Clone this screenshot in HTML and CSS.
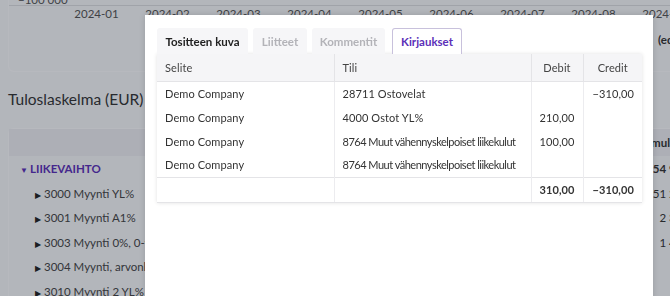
FILE: index.html
```html
<!DOCTYPE html>
<html lang="fi">
<head>
    <meta charset="UTF-8">
    <meta name="viewport" content="width=device-width, initial-scale=1.0">
    <title>Tuloslaskelma</title>
    <link rel="stylesheet" href="styles.css">
</head>
<body>
    <div class="page">
        <div class="chart-card">
            <div class="y-label">−100 000</div>
            <div class="x-axis">
                <span>2024-01</span>
                <span>2024-02</span>
                <span>2024-03</span>
                <span>2024-04</span>
                <span>2024-05</span>
                <span>2024-06</span>
                <span>2024-07</span>
                <span>2024-08</span>
                <span>2024-09</span>
            </div>
            <div class="legend">(edellinen)</div>
        </div>

        <h2 class="report-title">Tuloslaskelma (EUR)</h2>

        <div class="report-card">
            <div class="report-row report-head">
                <span></span>
                <span class="value">Kumulatiivinen</span>
            </div>
            <div class="report-row group">
                <span class="name"><span class="caret">▼</span>LIIKEVAIHTO</span>
                <span class="value">54 987,00</span>
            </div>
            <div class="report-row">
                <span class="name sub"><span class="caret">▶</span>3000 Myynti YL%</span>
                <span class="value">51 234,00</span>
            </div>
            <div class="report-row">
                <span class="name sub"><span class="caret">▶</span>3001 Myynti A1%</span>
                <span class="value">2 345,00</span>
            </div>
            <div class="report-row">
                <span class="name sub"><span class="caret">▶</span>3003 Myynti 0%, 0-verokannan myynti</span>
                <span class="value">1 408,00</span>
            </div>
            <div class="report-row">
                <span class="name sub"><span class="caret">▶</span>3004 Myynti, arvonlisäveroton</span>
                <span class="value"></span>
            </div>
            <div class="report-row">
                <span class="name sub"><span class="caret">▶</span>3010 Myynti 2 YL%</span>
                <span class="value"></span>
            </div>
        </div>
    </div>

    <div class="backdrop"></div>

    <div class="modal">
        <div class="tabs">
            <div class="tab dark">Tositteen kuva</div>
            <div class="tab">Liitteet</div>
            <div class="tab">Kommentit</div>
            <div class="tab active">Kirjaukset</div>
        </div>

        <table class="entries">
            <thead>
                <tr>
                    <th class="c-selite">Selite</th>
                    <th class="c-tili">Tili</th>
                    <th class="c-num">Debit</th>
                    <th class="c-num">Credit</th>
                </tr>
            </thead>
            <tbody>
                <tr>
                    <td>Demo Company</td>
                    <td>28711 Ostovelat</td>
                    <td class="num"></td>
                    <td class="num">−310,00</td>
                </tr>
                <tr>
                    <td>Demo Company</td>
                    <td>4000 Ostot YL%</td>
                    <td class="num">210,00</td>
                    <td class="num"></td>
                </tr>
                <tr>
                    <td>Demo Company</td>
                    <td class="long">8764 Muut vähennyskelpoiset liikekulut</td>
                    <td class="num">100,00</td>
                    <td class="num"></td>
                </tr>
                <tr>
                    <td>Demo Company</td>
                    <td class="long">8764 Muut vähennyskelpoiset liikekulut</td>
                    <td class="num"></td>
                    <td class="num"></td>
                </tr>
            </tbody>
            <tfoot>
                <tr>
                    <td></td>
                    <td></td>
                    <td class="num">310,00</td>
                    <td class="num">−310,00</td>
                </tr>
            </tfoot>
        </table>
    </div>
</body>
</html>
```

FILE: styles.css
```css
* {
    margin: 0;
    padding: 0;
    box-sizing: border-box;
}

body {
    font-family: Lato, "Noto Sans", Arial, sans-serif;
    font-size: 11.5px;
    color: #333;
    background: #f7f8fa;
    overflow: hidden;
    height: 296px;
}

/* taustasivu */
.page {
    width: 720px;
    margin-top: -14px;
    padding: 0 8px;
}

.chart-card {
    position: relative;
    height: 86px;
    border: 1px solid #fdfdfe;
    border-top: none;
    border-radius: 0 0 6px 6px;
}

.y-label {
    padding: 7px 0 0 9px;
    color: #555;
    height: 20px;
    border-bottom: 1px solid #dcdde0;
}

.x-axis {
    display: flex;
    padding-left: 52px;
    padding-top: 1px;
    color: #555;
}

.x-axis span {
    width: 71px;
    flex-shrink: 0;
    text-align: center;
}

.legend {
    position: absolute;
    left: 649px;
    top: 47px;
    font-weight: bold;
    color: #333;
    white-space: nowrap;
}

.report-title {
    font-weight: normal;
    font-size: 15.5px;
    color: #333;
    padding: 18px 0 0 0;
    height: 56px;
}

.report-card {
    border: 1px solid #fdfdfe;
    border-bottom: none;
    border-radius: 6px 6px 0 0;
}

.report-row {
    display: grid;
    grid-template-columns: 1fr 80px;
    height: 24.5px;
    align-items: center;
    padding-right: 6px;
}

.report-head {
    height: 27px;
    background: #eeeff2;
    font-weight: bold;
}

.report-row .value {
    text-align: right;
    white-space: nowrap;
}

.report-head .value {
    text-align: left;
    padding-left: 12px;
}

.group {
    height: 25px;
    color: #5b2fb8;
    font-weight: bold;
}

.group .value {
    color: #333;
}

.name {
    padding-left: 11px;
    white-space: nowrap;
}

.name.sub {
    padding-left: 26px;
    color: #444;
}

.caret {
    display: inline-block;
    width: 10px;
    font-size: 8px;
    color: #222;
}

.group .caret {
    color: #5b2fb8;
}

.sub .caret {
    width: 9px;
}

.backdrop {
    position: fixed;
    inset: 0;
    background: rgba(15, 20, 35, 0.29);
}

/* modaali */
.modal {
    position: absolute;
    left: 145px;
    top: 15px;
    width: 508px;
    height: 300px;
    background: #fff;
    padding: 13px 11px 0 12px;
    box-shadow: 0 0 6px rgba(0, 0, 0, 0.15);
}

.tabs {
    display: flex;
    gap: 5px;
    height: 26px;
}

.tab {
    width: 54px;
    display: flex;
    align-items: center;
    justify-content: center;
    background: #f6f6f8;
    color: #b3b3b8;
    font-weight: bold;
    border-radius: 3px 3px 0 0;
}

.tab.dark {
    width: 91px;
    color: #222;
}

.tab:nth-child(3) {
    width: 73px;
}

.tab.active {
    width: 70px;
    margin-left: 2px;
    background: #fff;
    color: #5b2fb8;
    border: 1px solid #c8c1dc;
    border-bottom: none;
    position: relative;
    z-index: 1;
}

.entries {
    width: 485px;
    border-collapse: collapse;
    table-layout: fixed;
    font-size: 11px;
    letter-spacing: 0.1px;
    box-shadow: 0 0 4px rgba(0, 0, 0, 0.12);
}

.entries th,
.entries td {
    text-align: left;
    font-weight: normal;
    padding: 0 8px;
    white-space: nowrap;
    overflow: hidden;
}

.entries th {
    height: 27px;
    background: #f5f5f7;
    color: #444;
    border-right: 1px solid #e4e4e7;
    border-bottom: 1px solid #e4e4e7;
}

.entries th:last-child {
    border-right: none;
}

.entries td {
    height: 24px;
    border-right: 1px solid #ececef;
}

.entries td.long {
    letter-spacing: -0.5px;
}

.entries td:last-child {
    border-right: none;
}

.c-selite { width: 177px; }
.c-tili { width: 197px; }
.entries th.c-num { text-align: center; }
.entries th.c-num:nth-child(3) { width: 52px; }
.entries th.c-num:nth-child(4) { width: 59px; }

.entries td.num {
    text-align: right;
}

.entries tfoot td {
    height: 25px;
    font-weight: bold;
    border-top: 1px solid #e4e4e7;
    border-bottom: 1px solid #e4e4e7;
}
```
